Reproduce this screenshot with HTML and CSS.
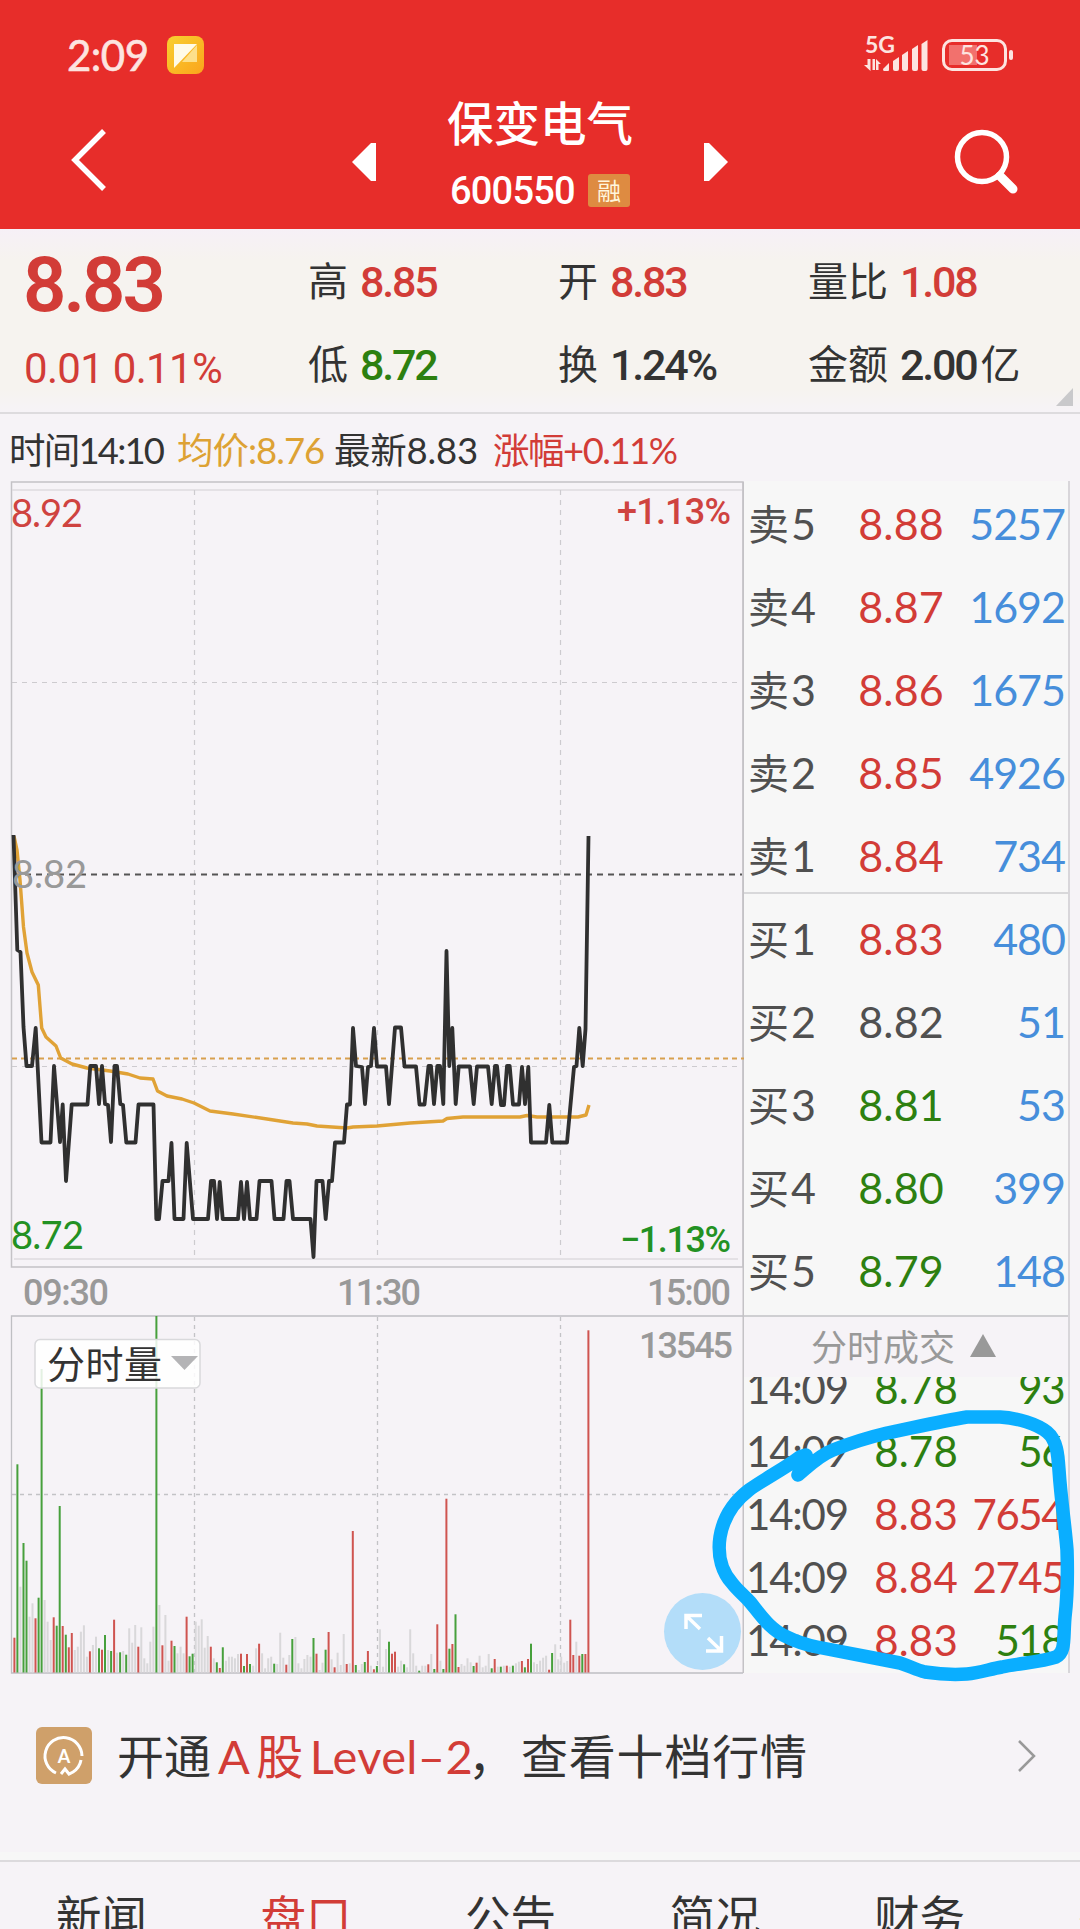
FILE: index.html
```html
<!DOCTYPE html>
<html lang="zh-CN">
<head>
  <meta charset="UTF-8" />
  <meta name="viewport" content="width=device-width, initial-scale=1.0" />
  <title>保变电气 600550</title>
  <link rel="stylesheet" href="styles.css">
</head>
<body>

  <header class="header">
    <div class="status">
      <span class="clock">2:09</span>
      <svg class="app-icon" width="38" height="38" viewBox="0 0 38 38">
        <defs>
          <linearGradient id="gold" x1="0" y1="0" x2="1" y2="1">
            <stop offset="0" stop-color="#f8d030" />
            <stop offset="1" stop-color="#fba41c" />
          </linearGradient>
        </defs>
        <rect width="37" height="38" rx="8" fill="url(#gold)" />
        <path d="M30 9V26H15Z" fill="#fde08a" />
        <path d="M7 8H30L7 32Z" fill="#fffbe8" />
      </svg>
      <div class="signal">
        <span class="net">5G</span>
        <svg width="66" height="36" viewBox="0 0 66 36">
          <g fill="#fde4e0">
            <path d="M3.500 24h3v12L0 30h3.500zM8.500 24h2.500v11H8.500zM12 24l5 5h-2.500v6H12z" />
            <path d="M19 34l6-6v7q0 1-1 1h-4q-1 0-1-2z" />
            <path d="M29 26l6-4v12q0 2-2 2h-2q-2 0-2-2z" />
            <path d="M38 20l6-4v18q0 2-2 2h-2q-2 0-2-2z" />
            <path d="M48 14l6-4v24q0 2-2 2h-2q-2 0-2-2z" />
            <path d="M57.500 9l6-4v29q0 2-2 2h-2q-2 0-2-2z" />
          </g>
        </svg>
      </div>
      <div class="battery"><span>53</span></div>
    </div>

    <div class="nav">
      <svg class="back" width="40" height="66" viewBox="0 0 40 66">
        <path d="M35 4L6 33L35 62" fill="none" stroke="#fff" stroke-width="5.5" />
      </svg>
      <svg class="prev" width="24" height="38" viewBox="0 0 24 38"><path d="M0 19L19 0H24V38H19Z" fill="#fff" /></svg>
      <div class="title">
        <div class="name">保变电气</div>
        <div class="code"><span>600550</span><i>融</i></div>
      </div>
      <svg class="next" width="24" height="38" viewBox="0 0 24 38"><path d="M24 19L5 0H0V38H5Z" fill="#fff" /></svg>
      <svg class="search" width="66" height="68" viewBox="0 0 66 68">
        <circle cx="28" cy="29" r="24.500" fill="none" stroke="#fff" stroke-width="5.500" />
        <path d="M46 48L59 61" stroke="#fff" stroke-width="9" stroke-linecap="round" />
      </svg>
    </div>
  </header>

  <section class="summary">
    <div class="price red">8.83</div>
    <div><label>高</label><b class="red">8.85</b></div>
    <div><label>开</label><b class="red">8.83</b></div>
    <div><label>量比</label><b class="red">1.08</b></div>
    <div class="change red">0.01 0.11%</div>
    <div><label>低</label><b class="green">8.72</b></div>
    <div><label>换</label><b>1.24%</b></div>
    <div><label>金额</label><b>2.00</b><label class="unit">亿</label></div>
    <svg class="corner" width="17" height="18" viewBox="0 0 17 18"><path d="M17 0V18H0Z" fill="#c9c9cb" /></svg>
  </section>

  <div class="legend">
    <span class="l1">时间14:10</span>
    <span class="l2 gold">均价:8.76</span>
    <span class="l3">最新8.83</span>
    <span class="l4 red">涨幅+0.11%</span>
  </div>

  <main class="quote">
    <svg class="chart" width="744" height="1194" viewBox="0 481 744 1194">
      <!-- price -->
      <g fill="none" stroke="#c4c2c6" stroke-width="1.5">
        <path d="M11.5 482H743V1267H11.5Z" />
        <path d="M12 490H742M14 1259H738" stroke="#dedce0" />
        <path d="M743.5 482V1673" stroke-width="2" />
      </g>
      <g stroke="#cdcbcf" stroke-width="1.2" stroke-dasharray="5 5">
        <path d="M194.5 490V1256M377.5 490V1256M560.5 490V1256" />
        <path d="M12 682.5H742M12 1066.5H742" />
      </g>
      <path d="M14 874.5H742" stroke="#555" stroke-width="2" stroke-dasharray="6 5" />
      <path d="M12 1058.5H744" stroke="#d8a04e" stroke-width="2" stroke-dasharray="5 4" />
      <polyline class="avg" points="14,836 17,850 20,880 23.5,927 27,953 32,972 38.3,985 41.7,1028 46,1037 56,1046 60.7,1058 72,1064 87,1068 110,1071 128,1074 140,1078 153,1079 157.5,1091 167,1096 182,1099 194,1103 210,1111 233,1114 267,1119 293,1123 307,1124 317,1126 347,1128 353,1127 377,1126 410,1123 443,1121 447,1118.5 463,1117 520,1117 527,1115.5 537,1117 578,1117 586,1115 589,1105" />
      <polyline class="line" points="13.5,835 17.3,950 20.5,952 23.5,1027 26.5,1066 32,1066 35.7,1028 41.5,1142.5 50.5,1142.5 54,1066 60,1142 62.7,1104.5 66,1181 71.7,1104.5 87.5,1104.5 90.3,1066 96,1066 99,1104 102,1066 105,1104 108,1105 111,1142 114.5,1066 117,1066 120.3,1104 123,1105 126.3,1142.5 135.5,1142.5 138.5,1104.5 153.5,1104.5 156.3,1219 159,1219 162.5,1181 168.5,1181 171.5,1143 174.5,1219 183.5,1219 186.7,1143 193,1219 208,1219 211,1181 214,1181 217,1219 219.7,1182 222.7,1219 238,1219 241,1182 244,1219 247,1182 250,1219 256.5,1219 259.5,1181 271.5,1181 274.5,1219 283.5,1219 286.5,1181 289.5,1181 293,1219 310.5,1219 313.5,1257 316.5,1181 322.5,1181 325.7,1219 329,1181 332,1181 335,1142.5 344,1142.5 347,1104.5 350,1104.5 353,1028 356,1066 362,1067 365,1104 368,1067 371,1066 374,1028 377,1066.5 386,1066.5 389,1104 395,1027.5 401,1027.5 404.5,1066.5 416,1066.5 419.5,1104.5 424.5,1104.5 428.5,1066 431,1066 434,1104 437.3,1066 440,1066 443.3,1104 446.5,951 449.3,1066 452.3,1028 455.7,1104 458.7,1066.5 470,1066.5 473.7,1104 477,1066.5 488,1066.5 491.7,1104 495,1066 497,1066 501,1105 504,1105 507,1066 509.7,1066 513,1104.5 519,1104.5 522,1067 525,1104 528.3,1067 531,1142.5 546,1142.5 549.3,1105 552.3,1142.5 567,1142.5 574,1067 576.5,1066 579.3,1028 582.7,1066 585.5,1029 588.5,836" />
      <g class="scale" font-size="38">
        <text x="11" y="527" textLength="72" class="t-red">8.92</text>
        <text x="12" y="888" textLength="75" fill="#999">8.82</text>
        <text x="11" y="1249" textLength="73" class="t-green">8.72</text>
      </g>
      <g class="din" font-size="36" text-anchor="end">
        <text x="731" y="524" textLength="114" class="t-red">+1.13%</text>
        <text x="731" y="1252" textLength="111" class="t-green">−1.13%</text>
        <g fill="#999">
          <text x="109" y="1305" textLength="86">09:30</text>
          <text x="421" y="1305" textLength="84">11:30</text>
          <text x="731" y="1305" textLength="84">15:00</text>
          <text x="733" y="1358" textLength="94">13545</text>
        </g>
      </g>

      <!-- volume -->
      <path d="M743 1316H11.5V1673H743" fill="none" stroke="#bfbfc3" stroke-width="1.3" />
      <g stroke="#c3c3c6" stroke-width="1.3" stroke-dasharray="4 4">
        <path d="M194.5 1317V1672M377.5 1317V1672M560.5 1317V1672M12 1494.5H742" />
      </g>
      <g id="volume"></g>

      <rect x="35" y="1339.5" width="165" height="48.5" rx="5" fill="#fff" fill-opacity=".85" stroke="#d9d9dc" stroke-width="1.5" />
      <text x="47" y="1378" font-size="38" textLength="115" fill="#333">分时量</text>
      <path d="M171 1356H198L184.500 1370Z" fill="#b4b4b6" />

      <circle cx="702.500" cy="1631.500" r="38.500" fill="#b3ddf9" />
      <path d="M686 1629V1615.500H702M686 1615.500L700 1629M706 1651H721.500V1636M721.500 1651L708 1638" fill="none" stroke="#fff" stroke-width="3.500" />
    </svg>

    <aside class="side">
      <div class="book" id="book"></div>
      <div class="deal-head"><span>分时成交</span><svg width="26" height="23" viewBox="0 0 26 23"><path d="M13 0L26 23H0Z" fill="#999" /></svg></div>
      <div class="deals" id="deals"></div>
    </aside>

    <!-- hand-drawn marker -->
    <svg class="marker" width="370" height="290" viewBox="705 1400 370 290">
      <path d="M798 1475L806 1455L800 1457C784 1469 764 1479 749 1490C732 1503 723 1519 720 1537C717 1557 723 1573 732 1583C738 1591 744 1595 750 1602C760 1614 770 1630 787 1637C797 1642 807 1645 817 1647L900 1663C910 1666 916 1670 925 1672C938 1674 952 1675 967 1674C980 1673 990 1669 1002 1667C1021 1663 1041 1662 1056 1657C1066 1652 1063 1639 1065 1617C1067 1600 1068 1580 1067 1550C1065 1525 1061 1500 1059 1470C1058 1455 1057 1440 1047 1432C1037 1424 1018 1418 1000 1417H967C942 1421 912 1428 887 1433C866 1438 848 1444 833 1450C818 1456 808 1467 798 1475Z" />
    </svg>
  </main>

  <div class="promo">
    <svg class="promo-icon" width="56" height="57" viewBox="0 0 56 57">
      <rect width="56" height="57" rx="6" fill="#cfa06a" />
      <path d="M20 46A18.500 18.500 0 1 1 46 29M45 33A18 18 0 0 1 37 45L33 47L29 42L25 47" fill="none" stroke="#fff" stroke-width="3" />
      <text x="28" y="36" font-size="18" font-weight="700" text-anchor="middle" fill="#fff">A</text>
    </svg>
    <div class="promo-text">
      <span class="p1">开通</span><span class="p2 red">A<span class="gu">股</span>Level–2</span><span class="p3">，</span><span class="p4">查看十档行情</span>
    </div>
    <svg class="more" width="20" height="34" viewBox="0 0 20 34"><path d="M2 2L17 17L2 32" fill="none" stroke="#999" stroke-width="2.500" /></svg>
  </div>

  <nav class="tabs">
    <a>新闻</a>
    <a class="red">盘口</a>
    <a>公告</a>
    <a>简况</a>
    <a>财务</a>
    <a>研报</a>
  </nav>

  <script>
    // label, price, amount, colour
    const book = [
      ['卖5', '8.88', 5257, 'red'],
      ['卖4', '8.87', 1692, 'red'],
      ['卖3', '8.86', 1675, 'red'],
      ['卖2', '8.85', 4926, 'red'],
      ['卖1', '8.84', 734, 'red'],
      ['买1', '8.83', 480, 'red'],
      ['买2', '8.82', 51, ''],
      ['买3', '8.81', 53, 'green'],
      ['买4', '8.80', 399, 'green'],
      ['买5', '8.79', 148, 'green']
    ];
    const deals = [
      ['14:09', '8.78', 93, 'green', 'green'],
      ['14:09', '8.78', 56, 'green', 'green'],
      ['14:09', '8.83', 7654, 'red', 'red'],
      ['14:09', '8.84', 2745, 'red', 'red'],
      ['14:09', '8.83', 518, 'red', 'green']
    ];
    // one bar per minute: colour (r/g/e) and top, three units to a pixel
    const volume = `r1103 g583 e950 g819 g872 e1040 e1000 r1045 g983 g297 e990 e1055 e1110 r1042 g1067 g708 r1068 g1094 r1132 r1089
      e1140 e1130 e1085 e1066 e1160 r1144 e1125 e1100 g1135 r1139 g1095 e1140 g1143 r1049 e1148 g1147 e1143 g1154 e1075 e1118
      e1065 r1130 e1072 e1165 e1180 e1115 e1070 g138 e1005 r1126 e1035 e1172 r1112 g1128 e1150 e1130 e1150 r1040 g1159 g1151
      e1055 e1067 e1048 e1133 e1098 r1130 e1165 g1177 r1194 g1132 e1172 e1160 e1160 e1165 e1152 r1151 g1188 r1152 g1182 e1187
      e1135 r1121 e1150 e1195 e1165 e1160 g1181 e1182 e1088 e1163 r1184 e1155 g1107 e1101 e1180 e1195 e1167 e1155 e1160 g1104
      r1151 e1200 e1178 g1139 r1086 e1168 r1192 e1148 e1185 e1092 r1182 e1180 r783 g1185 e1200 e1182 g1176 r1143 e1187 r1198
      g1188 e1078 e1190 e1137 g1115 r1151 r1145 e1190 e1172 g1183 e1192 e1078 e1150 e1187 g1202 e1187 e1187 r1183 e1152 g1197
      r1063 e1172 g1197 r686 g1136 r1122 g1033 r1191 e1182 e1187 e1165 e1177 g1188 r1178 e1157 e1192 e1187 e1152 g1195 r1167
      e1190 g1190 e1187 r1187 e1190 g1187 e1180 e1175 r1173 g1192 r1167 g1121 e1177 e1182 e1172 e1163 e1157 r1199 g1149 e1123
      e1168 e1160 e1178 e1173 r1049 r1155 e1115 r1157 g1152 r1152 r181`.split(/\s+/);
    const colors = { r: '#cf5450', g: '#47a03c', e: '#d9d8da' };

    document.getElementById('book').innerHTML = book.map(r =>
      `<div class="row"><span class="lv">${r[0][0]}<em>${r[0][1]}</em></span><span class="pr ${r[3]}">${r[1]}</span><span class="qty">${r[2]}</span></div>`
    ).join('');

    document.getElementById('deals').innerHTML = deals.map(r =>
      `<div class="deal"><span class="time">${r[0]}</span><span class="pr ${r[3]}">${r[1]}</span><span class="qty ${r[4]}">${r[2]}</span></div>`
    ).join('');

    document.getElementById('volume').innerHTML = volume.map((v, i) => {
      const top = 1270 + v.slice(1) / 3;
      const x = 13.4 + i * 3.021;
      return `<rect x="${x.toFixed(1)}" y="${top.toFixed(1)}" width="2" height="${(1672.5 - top).toFixed(1)}" fill="${colors[v[0]]}" />`;
    }).join('');
  </script>
</body>
</html>
```
FILE: styles.css
```css
* {
  box-sizing: border-box;
}
body {
  margin: 0;
  width: 1080px;
  height: 1929px;
  overflow: hidden;
  background: #f6f3f7;
  color: #333;
  font-family: Lato, "Noto Sans CJK SC", sans-serif;
}
svg {
  display: block;
  flex: none;
}
i, em {
  font-style: normal;
}
.red {
  color: #d23c37;
}
.green {
  color: #2d8010;
}
.gold {
  color: #dda234;
}

/* header */
.header {
  height: 229px;
  background: #e72d2a;
  color: #fff;
}
.status {
  display: flex;
  align-items: center;
  height: 110px;
  padding: 0 73px 0 67px;
  color: #fde4e0;
}
.clock {
  width: 100px;
  font-size: 42px;
  letter-spacing: -.5px;
  -webkit-text-stroke: .6px;
}
.signal {
  position: relative;
  margin-left: auto;
  width: 66px;
  height: 36px;
  margin: -4px 12px 0 auto;
}
.net {
  position: absolute;
  left: 1px;
  top: -1px;
  font-size: 23px;
  font-weight: 700;
  line-height: 20px;
}
.battery {
  position: relative;
  width: 65px;
  height: 32px;
  border: 3px solid #fde4e0;
  border-radius: 10px;
  background: linear-gradient(90deg, #f2716d 28px, transparent 28px) 4px 3px / 50px 20px no-repeat;
  font-size: 26px;
  line-height: 26px;
  text-align: center;
}
.battery::after {
  content: "";
  position: absolute;
  right: -9px;
  top: 8px;
  width: 4px;
  height: 10px;
  border-radius: 2px;
  background: #fde4e0;
}
.nav {
  display: flex;
  height: 119px;
  padding: 0 60px 0 69px;
}
.back {
  margin-top: 17px;
}
.prev {
  margin: 33px 0 0 243px;
}
.title {
  width: 186px;
  margin: 0 71px 0 71px;
}
.name {
  margin-top: -18px;
  font-size: 46.5px;
  font-weight: 500;
  line-height: 62px;
  white-space: nowrap;
}
.code {
  display: flex;
  align-items: center;
  justify-content: space-between;
  height: 34px;
  margin-top: 19px;
  padding: 0 3px 0 3px;
  font: 500 38px/37px Roboto, sans-serif;
  letter-spacing: -.8px;
}
.code span {
  padding-top: 3px;
}
.code i {
  width: 42px;
  height: 33px;
  border-radius: 3px;
  background: #de8b41;
  color: #fff6dd;
  font: 24px/32px "Noto Sans CJK SC", sans-serif;
  letter-spacing: 0;
  text-align: center;
}
.next {
  margin-top: 33px;
}
.search {
  margin: 18px 0 0 auto;
}

/* summary */
.summary {
  position: relative;
  display: grid;
  grid-template-columns: 283px 250px 250px 1fr;
  grid-template-rows: 83px 83px;
  height: 185px;
  padding: 11px 0 0 25px;
  border-bottom: 2px solid #dddbde;
  background: linear-gradient(#f6f0f7, #f6f3ef 30px 160px, #f6f3f7);
}
.summary > div {
  display: flex;
  align-items: center;
  font-size: 40px;
  line-height: 76px;
}
.summary label {
  margin: -6px 12px 0 0;
  font-family: "Noto Sans CJK SC", sans-serif;
}
.summary .unit {
  margin: -6px 0 0 4px;
}
.summary b,
.summary .change {
  font: 500 43px Roboto, sans-serif;
  letter-spacing: -2.2px;
}
.summary b {
  padding-top: 1px;
}
.summary .change {
  font-size: 42px;
  font-weight: 400;
  letter-spacing: -.7px;
  padding-top: 7px;
  margin-left: -1px;
}
.summary .price {
  margin-left: -2px;
  padding-top: 7px;
  font: 600 76px Roboto, sans-serif;
  letter-spacing: -3px;
}
.corner {
  position: absolute;
  right: 7px;
  bottom: 6px;
}
.legend {
  display: flex;
  height: 67px;
  padding: 0 9px;
  font-size: 36.500px;
  line-height: 72px;
  letter-spacing: -1px;
  white-space: nowrap;
}
.l1 {
  width: 168px;
  letter-spacing: -1.8px;
}
.l2 { width: 157px; }
.l3 {
  width: 159px;
  letter-spacing: -.2px;
}
.l4 {
  letter-spacing: -1.5px;
}

/* chart and order book */
.quote {
  position: relative;
  display: flex;
  height: 1194px;
}
.line,
.avg {
  fill: none;
  stroke: #303030;
  stroke-width: 3.8;
  stroke-linejoin: round;
}
.avg {
  stroke: #e0a236;
  stroke-width: 3.4;
}
.din {
  font-family: Roboto, sans-serif;
  font-weight: 500;
}
.t-red {
  fill: #cf4340;
}
.t-green {
  fill: #239123;
}
.side {
  width: 326px;
  height: 1192px;
  border-right: 2px solid #d8d6da;
  background: #f7f7f7;
}
.book {
  height: 836px;
  padding-top: 1px;
  border-bottom: 2px solid #cfcfd2;
  font-size: 43px;
}
.row,
.deal {
  display: flex;
  height: 83px;
  padding: 0 3px 0 4px;
  line-height: 83px;
  letter-spacing: -1px;
  color: #505050;
}
.row:nth-child(5) {
  background: linear-gradient(#d8d8da, #d8d8da) 0 78px / 100% 2px no-repeat;
}
.lv {
  width: 76px;
  font-size: 41px;
}
.lv em {
  margin-left: 3px;
  font-size: 43px;
}
.pr {
  flex: 1;
  text-align: right;
  letter-spacing: .2px;
}
.row .pr.red, .deal .red { color: #d23c37; }
.row .pr.green, .deal .green { color: #2d8010; }
.qty {
  width: 121px;
  text-align: right;
  color: #468edb;
}
.deal-head {
  display: flex;
  align-items: center;
  gap: 15px;
  height: 60px;
  padding: 0 0 3px 67px;
  background: #f6f3f7;
  color: #999;
  font-size: 36px;
}
.deal-head span {
  margin-top: -2px;
}
.deals {
  height: 296px;
  overflow: hidden;
}
.deal {
  height: 63px;
  padding: 0 4px 0 2px;
  font-size: 42px;
  line-height: 63px;
}
.deals .deal:first-child {
  margin-top: -20px;
}
.deal .time {
  width: 104px;
  letter-spacing: -1.2px;
}
.deal .qty {
  width: 106px;
  letter-spacing: -1.5px;
}
.marker {
  position: absolute;
  left: 705px;
  top: 919px;
  fill: none;
  stroke: #0aaeff;
  stroke-width: 13.500px;
  stroke-linejoin: round;
}

/* level-2 promo */
.promo {
  display: flex;
  align-items: center;
  height: 187px;
  padding: 0 43px 24px 36px;
  border-bottom: 2px solid #dcdadd;
  background: linear-gradient(#f6f3f7 177px, #f7f7f7 177px);
  font-size: 47px;
  white-space: nowrap;
}
.promo-text {
  display: flex;
  margin: -5px 0 0 25px;
}
.p1 {
  width: 101px;
}
.p2 {
  width: 252px;
  letter-spacing: .4px;
}
.gu {
  margin: 0 6px;
}
.p3 {
  width: 51px;
  text-indent: -2px;
  font-family: "Noto Sans CJK SC", sans-serif;
}
.p4 {
  letter-spacing: .8px;
}
.more {
  margin-left: auto;
}
.tabs {
  display: flex;
  overflow: hidden;
  padding: 24px 0 0 56px;
  font-size: 45.500px;
  line-height: 62px;
}
.tabs a {
  flex: none;
  width: 204.500px;
}
```
